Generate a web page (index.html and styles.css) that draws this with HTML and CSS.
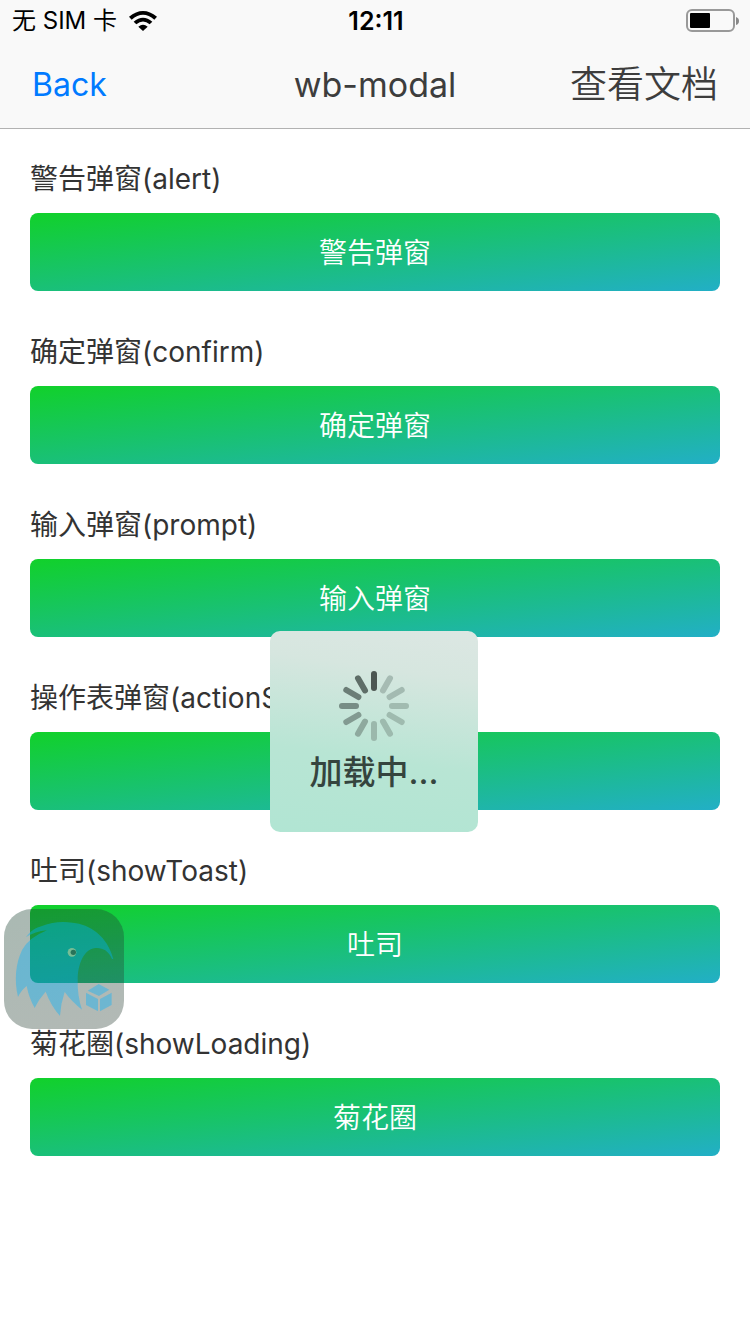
FILE: index.html
```html
<!DOCTYPE html>
<html lang="zh-CN">
<head>
<meta charset="utf-8">
<meta name="viewport" content="width=device-width, initial-scale=1">
<title>wb-modal</title>
<link rel="stylesheet" href="styles.css">
</head>
<body>
<header class="header">
  <div class="status">
    <div class="carrier">
      <span>无 SIM 卡</span>
      <svg class="wifi" viewBox="0 0 84 60" aria-hidden="true">
        <path d="M0 17Q42-17 84 17L76 26Q42-3 8 26Z"/>
        <path d="M14 32Q42 8 70 32L62 40Q42 23 22 40Z"/>
        <path d="M28 47Q42 35 56 47L42 60Z"/>
      </svg>
    </div>
    <time class="time">12:11</time>
    <svg class="battery" viewBox="0 0 54 24" aria-hidden="true">
      <rect x="1" y="1" width="47" height="21" rx="5" fill="none" stroke="#999" stroke-width="2"/>
      <rect x="4" y="4" width="20" height="15" rx="1" fill="#000"/>
      <path d="M50 8q3 1 3 4t-3 4z" fill="#888"/>
    </svg>
  </div>
  <nav class="nav">
    <a class="back" href="#">Back</a>
    <h1 class="title">wb-modal</h1>
    <a class="docs" href="#">查看文档</a>
  </nav>
</header>
<main class="content">
  <section class="item">
    <h2 class="label">警告弹窗(alert)</h2>
    <button class="action" type="button">警告弹窗</button>
  </section>
  <section class="item">
    <h2 class="label">确定弹窗(confirm)</h2>
    <button class="action" type="button">确定弹窗</button>
  </section>
  <section class="item">
    <h2 class="label">输入弹窗(prompt)</h2>
    <button class="action" type="button">输入弹窗</button>
  </section>
  <section class="item">
    <h2 class="label">操作表弹窗(actionSheet)</h2>
    <button class="action" type="button" aria-label="操作表弹窗"></button>
  </section>
  <section class="item">
    <h2 class="label">吐司(showToast)</h2>
    <button class="action" type="button">吐司</button>
  </section>
  <section class="item">
    <h2 class="label">菊花圈(showLoading)</h2>
    <button class="action" type="button">菊花圈</button>
  </section>
</main>
<button class="float" type="button" aria-label="调试">
  <svg class="eagle" viewBox="12 57 360 360" aria-hidden="true">
    <path d="M78 142C91 122 108 113 126 108C155 96 187 93 218 98C269 103 322 137 340 207H336C325 180 303 171 282 175C251 181 234 222 233 268C232 302 237 332 246 359Q216 336 194 306Q182 342 180 378Q152 346 137 305Q116 328 104 354Q86 322 80 288Q62 303 54 321C42 270 47 220 66 180Q86 143 141 121Q105 124 78 142Z"/>
    <path d="M263 302L296 282L328 299L297 318ZM258 308L294 327V364L258 345ZM300 327L335 308V345L300 364Z"/>
    <circle class="eye" cx="216" cy="187" r="13"/>
    <circle class="pupil" cx="220" cy="187" r="8"/>
  </svg>
</button>
<div class="loading" role="status">
  <svg class="spinner" viewBox="-35 -35 70 70" aria-hidden="true">
    <g stroke-width="6" stroke-linecap="round">
      <path d="M0-32V-18" stroke="#4d5753"/>
      <path d="M0-32V-18" stroke="#a6bbb3" transform="rotate(30)"/>
      <path d="M0-32V-18" stroke="#a3bab1" transform="rotate(60)"/>
      <path d="M0-32V-18" stroke="#a1bbb0" transform="rotate(90)"/>
      <path d="M0-32V-18" stroke="#9fbbaf" transform="rotate(120)"/>
      <path d="M0-32V-18" stroke="#9dbaae" transform="rotate(150)"/>
      <path d="M0-32V-18" stroke="#9bb8ac" transform="rotate(180)"/>
      <path d="M0-32V-18" stroke="#8ea99e" transform="rotate(210)"/>
      <path d="M0-32V-18" stroke="#829a91" transform="rotate(240)"/>
      <path d="M0-32V-18" stroke="#778d85" transform="rotate(270)"/>
      <path d="M0-32V-18" stroke="#6b7d76" transform="rotate(300)"/>
      <path d="M0-32V-18" stroke="#5e6d67" transform="rotate(330)"/>
    </g>
  </svg>
  <p class="loading-text">加载中...</p>
</div>
</body>
</html>
```
FILE: styles.css
```css
* {
  box-sizing: border-box;
}

body {
  margin: 0;
  min-height: 100vh;
  background: #fff;
  color: #333;
  font-family: Inter, "Noto Sans CJK SC", sans-serif;
  font-size: 28px;
}

.header {
  background: #f9f9f9;
  border-bottom: 1px solid #b2b2b2;
}

.status {
  display: grid;
  grid-template-columns: 1fr auto 1fr;
  align-items: center;
  height: 42px;
  padding: 0 10px 0 12px;
  color: #000;
  font-size: 24px;
  line-height: 42px;
}

.carrier {
  display: flex;
  align-items: center;
  gap: 12px;
}

.wifi {
  width: 28px;
  height: 20px;
}

.time {
  font-size: 25px;
  font-weight: 600;
}

.battery {
  width: 54px;
  height: 24px;
  justify-self: end;
}

.nav {
  display: grid;
  grid-template-columns: 1fr auto 1fr;
  align-items: center;
  height: 86px;
  padding: 0 32px;
  line-height: 44px;
}

.back,
.docs {
  text-decoration: none;
}

.back {
  color: #007aff;
  font-size: 32px;
}

.title {
  margin: 0;
  color: #3d3d3d;
  font-size: 34px;
  font-weight: 400;
}

.docs {
  justify-self: end;
  color: #3d3d3d;
  font-size: 37px;
  font-weight: 350;
}

.content {
  display: flex;
  flex-direction: column;
  gap: 41px;
  padding: 30px;
}

.label {
  margin: 0 0 14px;
  font-size: 28px;
  font-weight: 400;
  line-height: 40px;
}

.action {
  display: block;
  width: 100%;
  height: 78px;
  padding: 0 0 2px;
  border: 0;
  border-radius: 8px;
  background: linear-gradient(to bottom right, #11d12a, #22afc6);
  color: #fff;
  font-family: inherit;
  font-size: 28px;
  font-weight: 350;
}

.float {
  position: fixed;
  top: 909px;
  left: 4px;
  width: 120px;
  height: 120px;
  padding: 0;
  border: 0;
  border-radius: 28px;
  background: linear-gradient(160deg, rgba(24, 66, 48, 0.37), rgba(48, 66, 56, 0.37));
}

.eagle {
  display: block;
  width: 100%;
  fill: rgba(0, 178, 255, 0.38);
}

.eye {
  fill: #78bd95;
}

.pupil {
  fill: #28735a;
}

.loading {
  position: fixed;
  top: 631px;
  left: 50%;
  display: flex;
  flex-direction: column;
  align-items: center;
  width: 208px;
  margin-left: -105px;
  padding: 40px 0 38px;
  border-radius: 10px;
  background: linear-gradient(188deg, #dce7e3, #d6e6df 22%, #b8e5d4 62%, #b1e5d3);
}

.spinner {
  width: 70px;
  height: 70px;
}

.loading-text {
  margin: 10px 0 0;
  color: #35443e;
  font-size: 33px;
  font-weight: 500;
  line-height: 43px;
}
```
